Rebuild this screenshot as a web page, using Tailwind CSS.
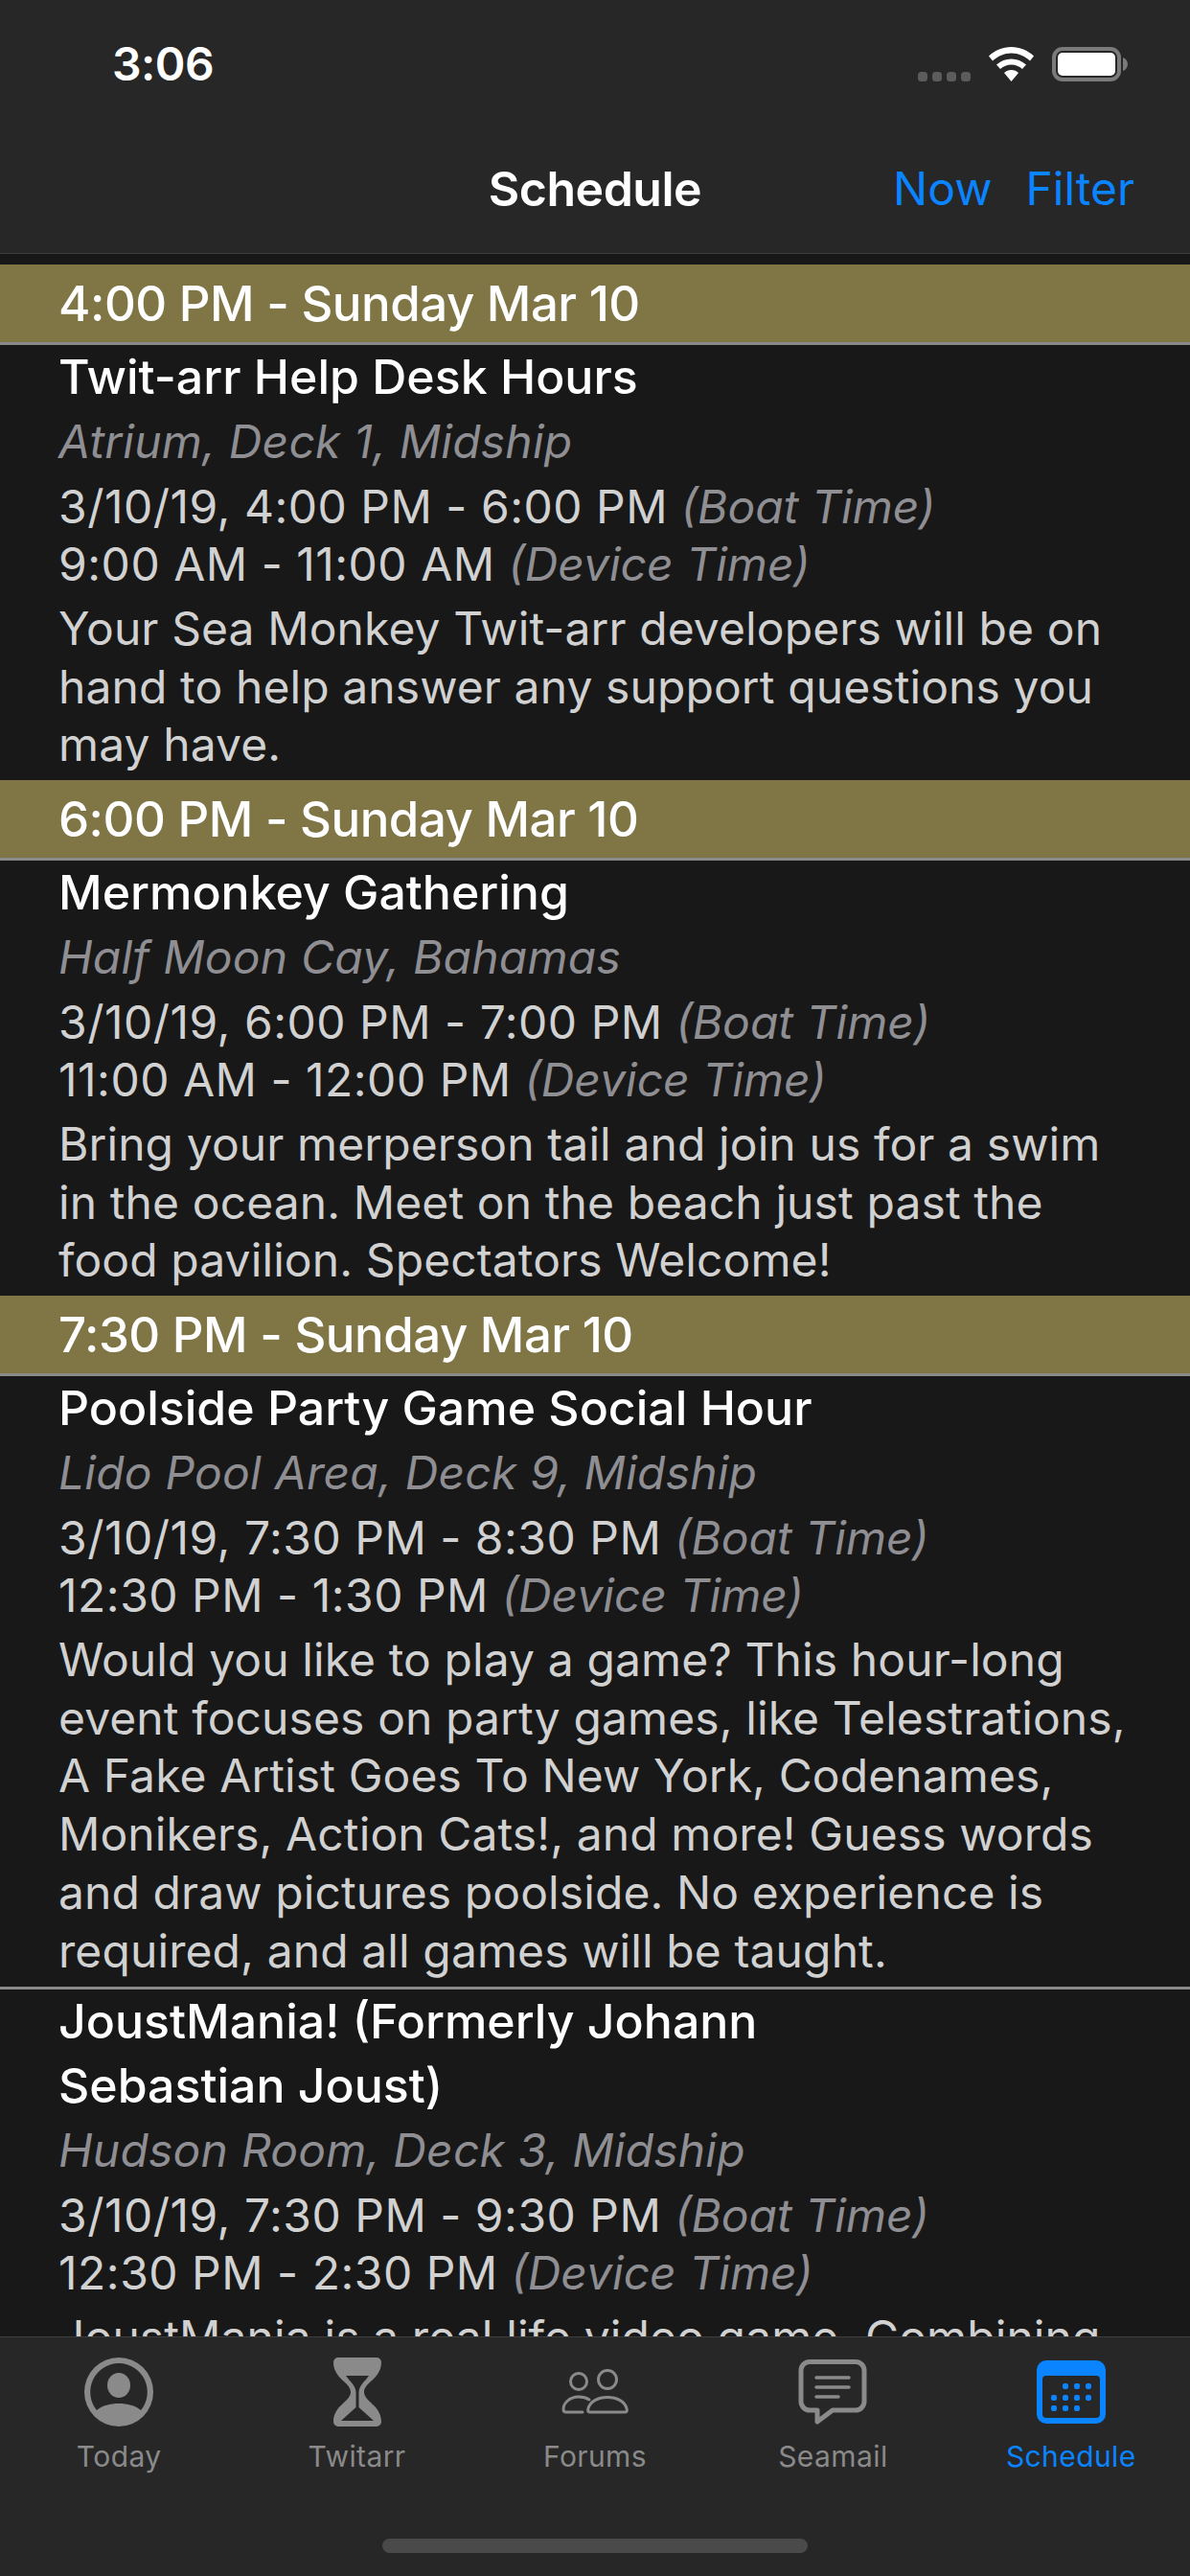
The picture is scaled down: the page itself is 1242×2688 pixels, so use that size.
<!DOCTYPE html>
<html lang="en">
<head>
    <meta charset="UTF-8">
    <meta name="viewport" content="width=device-width, initial-scale=1.0">
    <title>Schedule</title>
    <script src="https://cdn.jsdelivr.net/npm/@tailwindcss/browser@4"></script>
</head>
<body class="bg-[#181818] h-screen overflow-hidden flex flex-col font-['Inter',sans-serif] text-white">

    <!-- status + nav bar -->
    <header class="h-[265px] shrink-0 bg-[#272727] border-b border-[#3d3d3d] flex flex-col">
        <div class="h-[134px] flex justify-between pl-[117px] pr-[65px] pt-[39px]">
            <span class="text-[48px] leading-[56px] font-semibold tracking-[-0.5px]">3:06</span>
            <div class="flex items-start pt-[10px]">
                <svg class="mt-[26px] mr-[19px]" width="55" height="10" viewBox="0 0 55 10" fill="#5c5c5c">
                    <rect x="0" width="10" height="10" rx="3.500"/><rect x="15" width="10" height="10" rx="3.500"/><rect x="30" width="10" height="10" rx="3.500"/><rect x="45" width="10" height="10" rx="3.500"/>
                </svg>
                <svg class="mr-[19px]" width="47" height="36" viewBox="0 0 47 36" fill="#fff">
                    <path d="M23.500 0C14.500 0 6.500 3.500 0 9.500L4 14.500C9.500 9.500 16 6.500 23.500 6.500S37.500 9.500 43 14.500L47 9.500C40.500 3.500 32.500 0 23.500 0Z"/>
                    <path d="M23.500 12.500C17.500 12.500 12.500 14.500 8 18.500L12 23C15.500 20 19 18.500 23.500 18.500S31.500 20 35 23L39 18.500C34.500 14.500 29.500 12.500 23.500 12.500Z"/>
                    <path d="M23.500 24C20.500 24 18 25 16 27L23.500 36L31 27C29 25 26.500 24 23.500 24Z"/>
                </svg>
                <svg width="79" height="36" viewBox="0 0 79 36" fill="none">
                    <rect x="2" y="2" width="68" height="32" rx="9" stroke="#7a7a7a" stroke-width="4"/>
                    <rect x="6" y="6" width="60" height="24" rx="5" fill="#fff"/>
                    <path d="M74 11C77 12 79 15 79 18S77 24 74 25Z" fill="#7a7a7a"/>
                </svg>
            </div>
        </div>
        <div class="relative h-[130px] flex items-center justify-end pr-[58px] pb-[4px] text-[48px] leading-[60px]">
            <span class="absolute left-0 right-0 text-center text-[50px] font-semibold tracking-[-0.5px]">Schedule</span>
            <div class="relative flex gap-[35px] text-[#0a84ff]">
                <span>Now</span>
                <span>Filter</span>
            </div>
        </div>
    </header>

    <main class="flex-1 overflow-hidden pt-[11px]">

        <div class="h-[84px] bg-[#7f7545] border-b-[3px] border-[#8a8a8a] pl-[61px] pt-[2px] flex items-center text-[51px] font-medium tracking-[-0.5px]">4:00 PM - Sunday Mar 10</div>
        <div class="h-[454px] pl-[61px] pr-[60px]">
            <div class="text-[50px] leading-[67px] font-[550]">Twit-arr Help Desk Hours</div>
            <div class="text-[48px] leading-[67px] italic tracking-[0.2px] text-[#8e8e93]">Atrium, Deck 1, Midship</div>
            <div class="mt-[5px] text-[48px] leading-[60px] text-[#d1d1d1]"><span class="tracking-[0.5px]">3/10/19, 4:00 PM - 6:00 PM</span> <span class="italic text-[#8e8e93]">(Boat Time)</span></div>
            <div class="text-[48px] leading-[60px] text-[#d1d1d1]"><span class="tracking-[0.5px]">9:00 AM - 11:00 AM</span> <span class="italic text-[#8e8e93]">(Device Time)</span></div>
            <p class="mt-[7px] text-[48px] leading-[60.7px] tracking-[0.1px] text-[#d1d1d1]">Your Sea Monkey Twit-arr developers will be on hand to help answer any support questions you may have.</p>
        </div>

        <div class="h-[84px] bg-[#7f7545] border-b-[3px] border-[#8a8a8a] pl-[61px] pt-[2px] flex items-center text-[51px] font-medium tracking-[-0.5px]">6:00 PM - Sunday Mar 10</div>
        <div class="h-[454px] pl-[61px] pr-[60px]">
            <div class="text-[50px] leading-[67px] font-[550]">Mermonkey Gathering</div>
            <div class="text-[48px] leading-[67px] italic tracking-[0.2px] text-[#8e8e93]">Half Moon Cay, Bahamas</div>
            <div class="mt-[5px] text-[48px] leading-[60px] text-[#d1d1d1]"><span class="tracking-[0.5px]">3/10/19, 6:00 PM - 7:00 PM</span> <span class="italic text-[#8e8e93]">(Boat Time)</span></div>
            <div class="text-[48px] leading-[60px] text-[#d1d1d1]"><span class="tracking-[0.5px]">11:00 AM - 12:00 PM</span> <span class="italic text-[#8e8e93]">(Device Time)</span></div>
            <p class="mt-[7px] text-[48px] leading-[60.7px] tracking-[0.1px] text-[#d1d1d1]">Bring your merperson tail and join us for a swim in the ocean. Meet on the beach just past the food pavilion. Spectators Welcome!</p>
        </div>

        <div class="h-[84px] bg-[#7f7545] border-b-[3px] border-[#8a8a8a] pl-[61px] pt-[2px] flex items-center text-[51px] font-medium tracking-[-0.5px]">7:30 PM - Sunday Mar 10</div>
        <div class="h-[640px] border-b-[3px] border-[#8a8a8a] pl-[61px] pr-[60px]">
            <div class="text-[50px] leading-[67px] font-[550]">Poolside Party Game Social Hour</div>
            <div class="text-[48px] leading-[67px] italic tracking-[0.2px] text-[#8e8e93]">Lido Pool Area, Deck 9, Midship</div>
            <div class="mt-[5px] text-[48px] leading-[60px] text-[#d1d1d1]"><span class="tracking-[0.5px]">3/10/19, 7:30 PM - 8:30 PM</span> <span class="italic text-[#8e8e93]">(Boat Time)</span></div>
            <div class="text-[48px] leading-[60px] text-[#d1d1d1]"><span class="tracking-[0.5px]">12:30 PM - 1:30 PM</span> <span class="italic text-[#8e8e93]">(Device Time)</span></div>
            <p class="mt-[7px] text-[48px] leading-[60.7px] tracking-[0.1px] text-[#d1d1d1]">Would you like to play a game? This hour-long event focuses on party games, like Telestrations, A Fake Artist Goes To New York, Codenames, Monikers, Action Cats!, and more! Guess words and draw pictures poolside. No experience is required, and all games will be taught.</p>
        </div>

        <div class="pl-[61px] pr-[60px]">
            <div class="text-[50px] leading-[67px] font-[550] w-[800px]">JoustMania! (Formerly Johann Sebastian Joust)</div>
            <div class="text-[48px] leading-[67px] italic tracking-[0.2px] text-[#8e8e93]">Hudson Room, Deck 3, Midship</div>
            <div class="mt-[5px] text-[48px] leading-[60px] text-[#d1d1d1]"><span class="tracking-[0.5px]">3/10/19, 7:30 PM - 9:30 PM</span> <span class="italic text-[#8e8e93]">(Boat Time)</span></div>
            <div class="text-[48px] leading-[60px] text-[#d1d1d1]"><span class="tracking-[0.5px]">12:30 PM - 2:30 PM</span> <span class="italic text-[#8e8e93]">(Device Time)</span></div>
            <p class="mt-[7px] text-[48px] leading-[60.7px] tracking-[0.1px] text-[#d1d1d1]">JoustMania is a real life video game. Combining</p>
        </div>
    </main>

    <!-- tab bar -->
    <footer class="h-[250px] shrink-0 bg-[#272727] border-t border-[#3d3d3d] flex flex-col">
        <div class="grid grid-cols-5 pt-[21px] text-[30px] leading-[36px] tracking-[0.4px] text-[#8a8a8a]">
            <div class="flex flex-col items-center">
                <svg width="72" height="72" viewBox="0 0 72 72" fill="#8a8a8a">
                    <path fill-rule="evenodd" d="M36 0a36 36 0 1 0 0 72a36 36 0 0 0 0-72ZM36 6a30 30 0 0 1 23 49C53 50 45 48 36 48S19 50 13 55A30 30 0 0 1 36 6Z"/>
                    <ellipse cx="36" cy="29" rx="12" ry="13"/>
                </svg>
                <span class="mt-[13px]">Today</span>
            </div>
            <div class="flex flex-col items-center">
                <svg width="50" height="72" viewBox="0 0 50 72" fill="#8a8a8a">
                    <path fill-rule="evenodd" d="M5 0H45a5 5 0 0 1 5 5C50 22 32 26 32 36S50 50 50 67a5 5 0 0 1-5 5H5a5 5 0 0 1-5-5C0 50 18 46 18 36S0 22 0 5A5 5 0 0 1 5 0ZM13 19C18 26 23 29 23.500 36V52L8 66H42L26.500 52V36C27 29 32 26 37 19Z"/>
                </svg>
                <span class="mt-[13px]">Twitarr</span>
            </div>
            <div class="flex flex-col items-center">
                <svg class="mt-[12px] mb-[12px]" width="72" height="48" viewBox="0 0 72 48" fill="none" stroke="#8a8a8a" stroke-width="3">
                    <circle cx="19" cy="13" r="8.500"/>
                    <circle cx="49" cy="11" r="9.500"/>
                    <path stroke-linecap="round" d="M30 32C27 30 24 29 19 29C9 29 3 36 3 42C3 44 4 45 6 45H23"/>
                    <path d="M31 45C29 45 28 44 29 41C31 34 39 29.500 49 29.500C59 29.500 67 34 69 41C70 44 69 45 67 45Z"/>
                </svg>
                <span class="mt-[13px]">Forums</span>
            </div>
            <div class="flex flex-col items-center">
                <svg class="mt-[2px]" width="72" height="68" viewBox="0 0 72 68" fill="none" stroke="#8a8a8a">
                    <path stroke-width="5" stroke-linejoin="round" d="M12 2.500H60a9 9 0 0 1 9 9V44a9 9 0 0 1-9 9H36L20 65V53H12a9 9 0 0 1-9-9V11.500a9 9 0 0 1 9-9Z"/>
                    <path stroke-width="3.500" stroke-linecap="round" d="M19 19H53M19 29H53M19 39H42"/>
                </svg>
                <span class="mt-[15px]">Seamail</span>
            </div>
            <div class="flex flex-col items-center text-[#0a84ff]">
                <svg class="mt-[3px]" width="72" height="66" viewBox="0 0 72 66" fill="#0a84ff">
                    <path fill-rule="evenodd" d="M10 0H62a10 10 0 0 1 10 10V56a10 10 0 0 1-10 10H10A10 10 0 0 1 0 56V10A10 10 0 0 1 10 0ZM10 16a4 4 0 0 0-4 4V56a4 4 0 0 0 4 4H62a4 4 0 0 0 4-4V20a4 4 0 0 0-4-4Z"/>
                    <rect x="27" y="24" width="6" height="6" rx="2"/><rect x="39" y="24" width="6" height="6" rx="2"/><rect x="51" y="24" width="6" height="6" rx="2"/>
                    <rect x="15" y="36" width="6" height="6" rx="2"/><rect x="27" y="36" width="6" height="6" rx="2"/><rect x="39" y="36" width="6" height="6" rx="2"/><rect x="51" y="36" width="6" height="6" rx="2"/>
                    <rect x="15" y="47" width="6" height="6" rx="2"/><rect x="27" y="47" width="6" height="6" rx="2"/><rect x="39" y="47" width="6" height="6" rx="2"/>
                </svg>
                <span class="mt-[16px]">Schedule</span>
            </div>
        </div>
        <div class="mt-auto mb-[24px] mx-auto w-[444px] h-[15px] rounded-full bg-[#4a4a4a]"></div>
    </footer>
</body>
</html>
